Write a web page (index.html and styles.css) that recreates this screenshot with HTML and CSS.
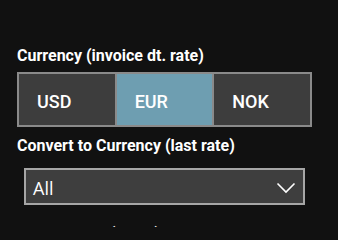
FILE: index.html
```html
<!DOCTYPE html>
<html>
<head>
<meta charset="utf-8">
<link rel="stylesheet" href="styles.css">
</head>
<body>
<div class="panel">
  <div class="label">Currency (invoice dt. rate)</div>
  <div class="seg">
    <div class="opt">USD</div>
    <div class="opt active">EUR</div>
    <div class="opt">NOK</div>
  </div>
  <div class="label label2">Convert to Currency (last rate)</div>
  <div class="dropdown">
    <span class="value">All</span>
    <svg class="chev" width="20" height="12" viewBox="0 0 20 12"><polyline points="1.5,1.5 10,10 18.5,1.5" fill="none" stroke="#ffffff" stroke-width="1.6"/></svg>
  </div>
  <div class="label label3">Invoice Date (fiscal)</div>
</div>
</body>
</html>
```
FILE: styles.css
```css
html, body {
  margin: 0;
  padding: 0;
  background: #111111;
}
body {
  height: 227px;
  overflow: hidden;
}
.panel {
  padding: 47px 0 0 17px;
  font-family: Roboto, "Noto Sans", sans-serif;
  color: #ffffff;
}
.label {
  font-size: 16px;
  line-height: 18px;
  font-weight: 700;
  height: 18px;
  white-space: nowrap;
}
.seg {
  margin-top: 7px;
  display: flex;
  width: 295px;
  height: 55px;
  box-sizing: border-box;
  border: 2px solid #8a8a8a;
}
.opt {
  flex: 1;
  background: #3d3d3d;
  display: flex;
  align-items: center;
  padding: 4px 0 0 18px;
  font-size: 18px;
  font-weight: 500;
}
.opt + .opt {
  border-left: 2px solid #8a8a8a;
}
.opt.active {
  background: #6e9eb1;
}
.label2 {
  margin-top: 10px;
}
.dropdown {
  margin: 13px 0 0 7px;
  width: 281px;
  height: 37px;
  box-sizing: border-box;
  border: 2px solid #a6a6a6;
  background: #3e3e3e;
  display: flex;
  align-items: center;
  justify-content: space-between;
  padding: 2px 7px 0 7px;
}
.value {
  font-family: "Open Sans", "Noto Sans", sans-serif;
  font-size: 18px;
}
.chev {
  display: block;
}
.label3 {
  margin-top: 20px;
}
```
